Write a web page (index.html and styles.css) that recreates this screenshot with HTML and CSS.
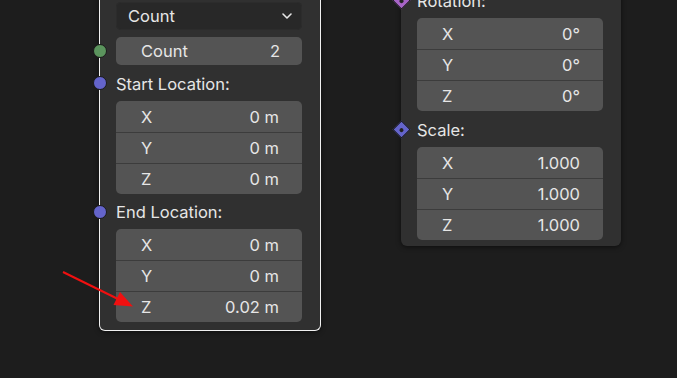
FILE: index.html
```html
<!DOCTYPE html>
<html lang="en">
<head>
  <meta charset="UTF-8" />
  <title>Curve Line Node</title>
  <link rel="stylesheet" href="styles.css">
</head>
<body>
  <div class="canvas">

    <div class="node node-left selected">
      <div class="select">
        <span>Count</span>
        <svg class="chevron" width="12" height="8" viewBox="0 0 12 8">
          <path d="M2 2 L6 6 L10 2" fill="none" stroke="#e6e6e6" stroke-width="1.6" stroke-linecap="round" stroke-linejoin="round"/>
        </svg>
      </div>

      <div class="single">
        <span class="socket sock-int"></span>
        <span class="name">Count</span>
        <span class="value">2</span>
      </div>

      <div class="label-row">
        <span class="socket sock-vec"></span>
        Start Location:
      </div>
      <div class="group">
        <div class="row"><span>X</span><span>0 m</span></div>
        <div class="row"><span>Y</span><span>0 m</span></div>
        <div class="row"><span>Z</span><span>0 m</span></div>
      </div>

      <div class="label-row">
        <span class="socket sock-vec"></span>
        End Location:
      </div>
      <div class="group">
        <div class="row"><span>X</span><span>0 m</span></div>
        <div class="row"><span>Y</span><span>0 m</span></div>
        <div class="row"><span>Z</span><span>0.02 m</span></div>
      </div>
    </div>

    <div class="node node-right">
      <div class="label-row">
        <span class="diamond sock-rot"></span>
        Rotation:
      </div>
      <div class="group">
        <div class="row"><span>X</span><span>0°</span></div>
        <div class="row"><span>Y</span><span>0°</span></div>
        <div class="row"><span>Z</span><span>0°</span></div>
      </div>

      <div class="label-row">
        <span class="diamond sock-vec"></span>
        Scale:
      </div>
      <div class="group">
        <div class="row"><span>X</span><span>1.000</span></div>
        <div class="row"><span>Y</span><span>1.000</span></div>
        <div class="row"><span>Z</span><span>1.000</span></div>
      </div>
    </div>

    <!-- annotation arrow -->
    <svg class="arrow" width="677" height="378" viewBox="0 0 677 378">
      <line x1="63" y1="272" x2="118" y2="299" stroke="#f01010" stroke-width="2"/>
      <polygon points="133,306.5 113.5,305 120,292" fill="#f01010"/>
    </svg>

  </div>
</body>
</html>
```

FILE: styles.css
```css
body {
  margin: 0;
  background: #1d1d1d;
  font-family: Inter, "Noto Sans", sans-serif;
  font-size: 16.5px;
  color: #e6e6e6;
}

.canvas {
  position: relative;
  width: 677px;
  height: 378px;
  overflow: hidden;
  background: #1d1d1d;
}

.node {
  position: absolute;
  width: 220px;
  box-sizing: border-box;
  padding: 0 18px 0 16px;
  background: #303030;
  border-radius: 0 0 6px 6px;
  box-shadow: 0 1px 5px rgba(0, 0, 0, 0.55);
}

.node-left {
  left: 99px;
  top: -40px;
  width: 222px;
  padding-top: 42px;
  padding-bottom: 8px;
  border: 1px solid #f0f0f0;
  border-top: none;
}

.node-right {
  left: 401px;
  top: -18px;
  padding-bottom: 6px;
}

.select {
  display: flex;
  align-items: center;
  justify-content: space-between;
  height: 28px;
  padding: 0 9px 0 12px;
  background: #282828;
  border-radius: 5px;
  box-shadow: inset 0 0 0 1px #2c2c2c;
}

.chevron {
  display: block;
}

.single {
  position: relative;
  display: flex;
  align-items: center;
  justify-content: space-between;
  height: 28px;
  margin-top: 7px;
  padding: 0 22px 0 25px;
  background: #545454;
  border-radius: 5px;
}

.label-row {
  position: relative;
  display: flex;
  align-items: center;
  height: 36px;
  padding-top: 1px;
  box-sizing: border-box;
}

.node-left .group + .label-row {
  height: 35px;
}

.group {
  background: #545454;
  border-radius: 5px;
  overflow: hidden;
}

.row {
  display: flex;
  align-items: center;
  justify-content: space-between;
  height: 31px;
  box-sizing: border-box;
  padding: 0 23px 0 25px;
}

.row + .row {
  border-top: 1px solid #3c3c3c;
}

.socket {
  position: absolute;
  left: -23px;
  top: 50%;
  width: 12px;
  height: 12px;
  margin-top: -7px;
  border: 1px solid #1a1a1a;
  border-radius: 50%;
}

.diamond {
  position: absolute;
  left: -22px;
  top: 50%;
  width: 11px;
  height: 11px;
  margin-top: -6.5px;
  border: 1px solid #1a1a1a;
  transform: rotate(45deg);
}

.diamond::after {
  content: "";
  position: absolute;
  left: 3.5px;
  top: 3.5px;
  width: 4px;
  height: 4px;
  border-radius: 50%;
  background: #222222;
}

.sock-int {
  background: #5b945d;
}

.sock-vec {
  background: #6464cb;
}

.sock-rot {
  background: #a864c8;
}

.arrow {
  position: absolute;
  left: 0;
  top: 0;
  pointer-events: none;
}
```
